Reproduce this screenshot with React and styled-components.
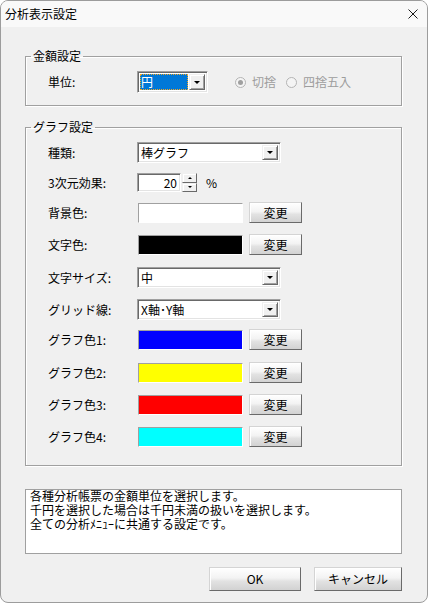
import React from 'react';
import styled, { createGlobalStyle } from 'styled-components';

const GlobalStyle = createGlobalStyle`
  html, body {
    margin: 0;
    padding: 0;
    background: #ffffff;
  }
  body {
    font-family: "Noto Sans CJK JP", "Liberation Sans", sans-serif;
    font-size: 12px;
    color: #000;
  }
  * {
    box-sizing: border-box;
  }
`;

const Window = styled.div`
  width: 428px;
  height: 603px;
  background: #f0f0f0;
  border: 1px solid #9c9c9c;
  border-radius: 8px;
  overflow: hidden;
  display: flex;
  flex-direction: column;
`;

const TitleBar = styled.div`
  height: 26px;
  flex: none;
  display: flex;
  align-items: center;
  justify-content: space-between;
  padding: 0 9px 0 4px;
  background: #f9f9f9;
  font-size: 12px;
  line-height: 14px;
`;

const Body = styled.div`
  padding: 0 25px 0 24px;
  display: flex;
  flex-direction: column;
`;

const Group = styled.fieldset`
  margin: ${(p) => p.$top}px 0 0 0;
  padding: 8px 0 ${(p) => p.$bottom}px 5px;
  border: 1px solid #a0a0a0;
  box-shadow: 1px 1px 0 #ffffff, inset 1px 1px 0 #ffffff;
  min-width: 0;
`;

const Legend = styled.legend`
  padding: 0 2px;
  font-size: 12px;
  line-height: 14px;
`;

const Row = styled.div`
  display: flex;
  align-items: center;
  height: ${(p) => p.$h || 21}px;
  margin-top: ${(p) => p.$mt || 0}px;
  padding-left: 17px;
`;

const Label = styled.span`
  width: 89px;
  flex: none;
  line-height: 14px;
`;

const Combo = styled.div`
  width: ${(p) => p.$w}px;
  height: ${(p) => p.$h}px;
  display: flex;
  background: #ffffff;
  border-style: solid;
  border-width: 1px;
  border-color: #a0a0a0 #ffffff #ffffff #a0a0a0;
  box-shadow: inset 1px 1px 0 #696969, inset -1px -1px 0 #e3e3e3;
  padding: 2px;
`;

const ComboText = styled.div`
  flex: 1;
  display: flex;
  align-items: center;
  padding-left: 1px;
  line-height: 14px;
  color: ${(p) => (p.$selected ? '#ffffff' : '#000000')};
  background: ${(p) => (p.$selected ? '#0078d7' : 'transparent')};
  outline: ${(p) => (p.$selected ? '1px dotted #f5a623' : 'none')};
  outline-offset: -1px;
  margin-right: 1px;
`;

const ArrowButton = styled.div`
  width: 16px;
  flex: none;
  display: flex;
  align-items: center;
  justify-content: center;
  background: #f0f0f0;
  border-style: solid;
  border-width: 1px;
  border-color: #f0f0f0 #696969 #696969 #f0f0f0;
  box-shadow: inset 1px 1px 0 #ffffff, inset -1px -1px 0 #a0a0a0;
`;

const Triangle = styled.span`
  width: 0;
  height: 0;
  border-left: ${(p) => p.$size}px solid transparent;
  border-right: ${(p) => p.$size}px solid transparent;
  border-top: ${(p) => (p.$up ? 0 : p.$size)}px solid #000;
  border-bottom: ${(p) => (p.$up ? p.$size : 0)}px solid #000;
`;

const RadioGroup = styled.div`
  display: flex;
  align-items: center;
  margin-left: 27px;
  color: #9d9d9d;
  line-height: 14px;
`;

const Radio = styled.span`
  width: 11px;
  height: 11px;
  border-radius: 50%;
  border: 1px solid #b4b4b4;
  background: #f4f4f4;
  display: flex;
  align-items: center;
  justify-content: center;
  margin: 0 6px 0 ${(p) => p.$ml || 0}px;

  &::after {
    content: '';
    width: 5px;
    height: 5px;
    border-radius: 50%;
    background: ${(p) => (p.$checked ? '#a0a0a0' : 'transparent')};
  }
`;

const SpinBox = styled(Combo)`
  justify-content: flex-end;
  align-items: center;
  padding: 0 3px 0 0;
  line-height: 14px;
`;

const SpinButtons = styled.div`
  width: 15px;
  height: 19px;
  display: flex;
  flex-direction: column;
  margin-left: 1px;
`;

const SpinButton = styled.div`
  flex: 1;
  display: flex;
  align-items: center;
  justify-content: center;
  background: #f0f0f0;
  border-style: solid;
  border-width: 1px;
  border-color: #f0f0f0 #696969 #696969 #f0f0f0;
  box-shadow: inset 1px 1px 0 #ffffff;
`;

const Unit = styled.span`
  margin-left: 9px;
  line-height: 14px;
`;

const Swatch = styled.div`
  width: 105px;
  height: 20px;
  margin-left: 1px;
  background: ${(p) => p.$color};
  border-style: solid;
  border-width: 1px;
  border-color: #a0a0a0 #ffffff #ffffff #a0a0a0;
`;

const Button = styled.button`
  width: ${(p) => p.$w}px;
  height: ${(p) => p.$h}px;
  margin-left: ${(p) => p.$ml || 0}px;
  padding: 0;
  font-family: inherit;
  font-size: 12px;
  line-height: 14px;
  color: #000;
  border-style: solid;
  border-width: 1px;
  border-color: #d4d4d4 #6a6a6a #6a6a6a #d4d4d4;
  box-shadow: inset 1px 1px 0 #ffffff;
  background: linear-gradient(to bottom, #ffffff 0%, #f3f3f3 45%, #e2e2e2 60%, #d2d2d2 100%);
`;

const Description = styled.div`
  margin-top: 23px;
  height: 65px;
  background: #ffffff;
  border: 1px solid #a0a0a0;
  padding: 0 4px;
  font-family: "Liberation Sans", "Noto Sans CJK JP", sans-serif;
  font-size: 12px;
  line-height: 14px;
`;

const Footer = styled.div`
  display: flex;
  justify-content: flex-end;
  gap: 13px;
  margin-top: 13px;
`;

const CloseIcon = () => (
  <svg width="10" height="10" viewBox="0 0 10 10">
    <path d="M0.5 0.5 L9.5 9.5 M9.5 0.5 L0.5 9.5" stroke="#1a1a1a" strokeWidth="1" fill="none" />
  </svg>
);

const DropDown = ({ w, h, text, selected }) => (
  <Combo $w={w} $h={h}>
    <ComboText $selected={selected}>{text}</ComboText>
    <ArrowButton>
      <Triangle $size={3.5} />
    </ArrowButton>
  </Combo>
);

const colorRows = [
  { label: '背景色:', color: '#ffffff', mt: 9 },
  { label: '文字色:', color: '#000000', mt: 11 },
];

const graphColors = [
  { label: 'グラフ色1:', color: '#0000ff', mt: 9 },
  { label: 'グラフ色2:', color: '#ffff00', mt: 12 },
  { label: 'グラフ色3:', color: '#ff0000', mt: 11 },
  { label: 'グラフ色4:', color: '#00ffff', mt: 11 },
];

const ColorRow = ({ label, color, mt }) => (
  <Row $mt={mt}>
    <Label>{label}</Label>
    <Swatch $color={color} />
    <Button $w={53} $h={21} $ml={6}>変更</Button>
  </Row>
);

export default function App() {
  return (
    <>
      <GlobalStyle />
      <Window>
        <TitleBar>
          <span>分析表示設定</span>
          <CloseIcon />
        </TitleBar>
        <Body>
          <Group $top={22} $bottom={12}>
            <Legend>金額設定</Legend>
            <Row $h={22}>
              <Label>単位:</Label>
              <DropDown w={71} h={22} text="円" selected />
              <RadioGroup>
                <Radio $checked />
                <span>切捨</span>
                <Radio $ml={10} />
                <span>四捨五入</span>
              </RadioGroup>
            </Row>
          </Group>

          <Group $top={14} $bottom={18}>
            <Legend>グラフ設定</Legend>
            <Row>
              <Label>種類:</Label>
              <DropDown w={144} h={21} text="棒グラフ" />
            </Row>
            <Row $mt={9}>
              <Label>3次元効果:</Label>
              <SpinBox $w={44} $h={19}>20</SpinBox>
              <SpinButtons>
                <SpinButton><Triangle $size={2.5} $up /></SpinButton>
                <SpinButton><Triangle $size={2.5} /></SpinButton>
              </SpinButtons>
              <Unit>%</Unit>
            </Row>
            {colorRows.map((r) => (
              <ColorRow key={r.label} {...r} />
            ))}
            <Row $mt={12}>
              <Label>文字サイズ:</Label>
              <DropDown w={144} h={21} text="中" />
            </Row>
            <Row $mt={11}>
              <Label>グリッド線:</Label>
              <DropDown w={144} h={21} text="X軸･Y軸" />
            </Row>
            {graphColors.map((r) => (
              <ColorRow key={r.label} {...r} />
            ))}
          </Group>

          <Description>
            各種分析帳票の金額単位を選択します。
            <br />
            千円を選択した場合は千円未満の扱いを選択します。
            <br />
            全ての分析ﾒﾆｭｰに共通する設定です。
          </Description>

          <Footer>
            <Button $w={92} $h={24}>OK</Button>
            <Button $w={88} $h={24}>キャンセル</Button>
          </Footer>
        </Body>
      </Window>
    </>
  );
}
